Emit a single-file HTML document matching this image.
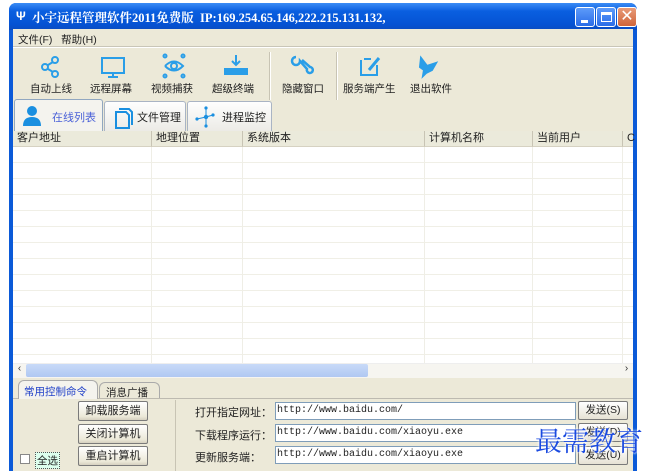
<!DOCTYPE html>
<html style="width:655px;height:471px;overflow:hidden"><head><meta charset="utf-8"><style>
*{margin:0;padding:0;box-sizing:border-box}
body{width:655px;height:471px;background:#fff;position:relative;overflow:hidden;font-family:"Liberation Sans","Noto Sans CJK SC",sans-serif;font-size:11px;color:#222}
.a{position:absolute}
.win{left:9px;top:3px;width:628px;height:468px;background:#0b5ad8;border-radius:7px 7px 0 0}
.title{left:9px;top:3px;width:628px;height:27px;border-radius:7px 7px 0 0;background:linear-gradient(#3b8cf5,#0a5fe0 30%,#0552d3 80%,#0a4cc0)}
.client{left:13px;top:29px;width:620px;height:442px;background:#ece9d8}
.tt{color:#fff;font-weight:bold;font-size:12.5px;font-family:"Liberation Serif","Noto Serif CJK SC",serif;top:8px;left:32px;white-space:nowrap}
.wb{top:7px;width:20px;height:20px;border:1px solid #fff;border-radius:3px;background:linear-gradient(#5d9bfa,#2a6ce8)}
.lbl{font-size:10.5px;top:81px;white-space:nowrap}
.sep{width:2px;height:48px;top:52px;border-left:1px solid #c8c4b4;border-right:1px solid #fff}
.tab{top:101px;height:30px;border:1px solid #a9b4c4;border-bottom:none;border-radius:3px 3px 0 0;background:linear-gradient(#fefefe,#ecebe6);font-size:11px}
.hd{top:131px;height:16px;background:#ebeadb;border-bottom:1px solid #d6d2c2;border-right:1px solid #c8c4b4;padding-left:4px;font-size:11px;line-height:15px}
.btn{left:78px;width:70px;height:20px;border:1px solid #7a7a7a;border-radius:2px;background:linear-gradient(#fff,#ece9d8 80%,#d6d0c0);text-align:center;line-height:18px;font-size:11px}
.in{left:275px;width:301px;height:18px;background:#fff;border:1px solid #7f9db9;font-family:"Liberation Mono",monospace;font-size:10px;line-height:16px;padding-left:1px}
.send{left:578px;width:50px;height:19px;border:1px solid #7a7a7a;border-radius:2px;background:linear-gradient(#fff,#e6e2d4);text-align:center;line-height:17px;font-size:10.5px}
.fl{left:195px;font-size:11px}
</style></head><body>
<div class="a win"></div>
<div class="a title"></div>
<div class="a" style="left:16px;top:9px;color:#fff;font-size:12px;font-weight:bold">Ψ</div>
<div class="a tt">小宇远程管理软件2011免费版 &nbsp;IP:169.254.65.146,222.215.131.132,</div>
<div class="a wb" style="left:575px"><div class="a" style="left:5px;top:12px;width:7px;height:3px;background:#fff"></div></div>
<div class="a wb" style="left:596px"><div class="a" style="left:4px;top:4px;width:11px;height:10px;border:1px solid #fff;border-top-width:3px"></div></div>
<div class="a wb" style="left:617px;background:linear-gradient(#e89a78,#d0643a);color:#fff;font-size:16px;line-height:17px;text-align:center">✕</div>
<div class="a client"></div>
<div class="a" style="left:18px;top:32px;font-size:10.5px">文件(F) &nbsp;&nbsp;帮助(H)</div>
<div class="a" style="left:13px;top:46px;width:620px;height:1px;background:#c9c6b8"></div>
<div class="a" style="left:13px;top:47px;width:620px;height:1px;background:#fff"></div>
<svg class="a" style="left:13px;top:50px" width="460" height="30" fill="none" stroke="#2a9ee8" stroke-width="2">
<circle cx="32" cy="17" r="3"/><circle cx="42" cy="10" r="3"/><circle cx="42" cy="24" r="3"/><path d="M35 15l5-3M35 19l5 3"/>
<rect x="89" y="8" width="22" height="15"/><path d="M95 27h10M100 23v4"/>
<circle cx="161" cy="16" r="3"/><path d="M152 16q9-9 18 0q-9 9-18 0"/><circle cx="152" cy="6" r="1.5"/><circle cx="170" cy="6" r="1.5"/><circle cx="152" cy="26" r="1.5"/><circle cx="170" cy="26" r="1.5"/>
<path d="M223 5v9M219 11l4 4 4-4"/><rect x="212" y="19" width="22" height="5" fill="#2a9ee8"/>
<path d="M283 7a4 4 0 1 0 4 4l7 8a3 3 0 1 0 3-2l-8-7" stroke-width="2.5"/>
<path d="M351 9h7M348 10v15h16v-10"/><path d="M356 20l10-12" stroke-width="3"/>
<path d="M408 8l6 8 9-3-4 7-6 3-3 3 1-6-4-3z" fill="#2a9ee8"/>
</svg>
<div class="a lbl" style="left:30px">自动上线</div>
<div class="a lbl" style="left:90px">远程屏幕</div>
<div class="a lbl" style="left:151px">视频捕获</div>
<div class="a lbl" style="left:212px">超级终端</div>
<div class="a sep" style="left:269px"></div>
<div class="a lbl" style="left:282px">隐藏窗口</div>
<div class="a sep" style="left:336px"></div>
<div class="a lbl" style="left:343px">服务端产生</div>
<div class="a lbl" style="left:410px">退出软件</div>
<div class="a tab" style="left:14px;width:89px;top:99px;height:33px;background:#f4f3ee;border-color:#91a7c0"></div>
<div class="a tab" style="left:104px;width:82px"></div>
<div class="a tab" style="left:187px;width:85px"></div>
<svg class="a" style="left:20px;top:104px" width="260" height="26">
<circle cx="12" cy="7" r="5" fill="#1a8fe0"/><path d="M3 22q0-9 9-9t9 9z" fill="#1a8fe0"/>
<path d="M96 8h10l3 3v13h-13z M99 5h10l3 3v13" fill="none" stroke="#1a8fe0" stroke-width="2"/>
<g fill="#1a8fe0"><circle cx="186" cy="4" r="1.6"/><circle cx="186" cy="13" r="2.2"/><circle cx="186" cy="22" r="1.6"/><circle cx="177" cy="15" r="1.6"/><circle cx="193" cy="11" r="1.6"/></g>
<path d="M186 4v18M177 15l9-2 7-2" stroke="#1a8fe0"/>
</svg>
<div class="a" style="left:52px;top:109px;color:#4b62d8">在线列表</div>
<div class="a" style="left:137px;top:109px">文件管理</div>
<div class="a" style="left:222px;top:109px">进程监控</div>
<div class="a" style="left:13px;top:147px;width:620px;height:216px;background:#fff;background-image:repeating-linear-gradient(#fff 0 15px,#f0efe6 15px 16px)"></div>
<div class="a hd" style="left:13px;width:139px">客户地址</div>
<div class="a hd" style="left:152px;width:91px">地理位置</div>
<div class="a hd" style="left:243px;width:182px">系统版本</div>
<div class="a hd" style="left:425px;width:108px">计算机名称</div>
<div class="a hd" style="left:533px;width:90px">当前用户</div>
<div class="a hd" style="left:623px;width:10px;border-right:none">C</div>
<div class="a" style="left:151px;top:147px;width:1px;height:216px;background:#efeee6"></div>
<div class="a" style="left:242px;top:147px;width:1px;height:216px;background:#efeee6"></div>
<div class="a" style="left:424px;top:147px;width:1px;height:216px;background:#efeee6"></div>
<div class="a" style="left:532px;top:147px;width:1px;height:216px;background:#efeee6"></div>
<div class="a" style="left:622px;top:147px;width:1px;height:216px;background:#efeee6"></div>
<div class="a" style="left:13px;top:363px;width:620px;height:15px;background:#f6f5f0;border-top:1px solid #eee"></div>
<div class="a" style="left:13px;top:363px;width:13px;height:15px;font-size:10px;color:#333;text-align:center">‹</div>
<div class="a" style="left:620px;top:363px;width:13px;height:15px;font-size:10px;color:#333;text-align:center">›</div>
<div class="a" style="left:26px;top:364px;width:342px;height:13px;background:linear-gradient(#c8daf8,#b0c8f2);border-radius:2px"></div>
<div class="a" style="left:13px;top:398px;width:620px;height:1px;background:#bdbab0"></div>
<div class="a" style="left:18px;top:380px;width:80px;height:19px;border:1px solid #aaa;border-bottom:none;border-radius:6px 6px 0 0;background:#f4f3ee;font-size:10.5px;color:#2040c8;padding:3px 0 0 5px">常用控制命令</div>
<div class="a" style="left:99px;top:382px;width:61px;height:16px;border:1px solid #aaa;border-bottom:none;border-radius:6px 6px 0 0;font-size:10.5px;padding:2px 0 0 6px">消息广播</div>
<div class="a" style="left:175px;top:400px;width:1px;height:71px;background:#c8c4b4"></div>
<div class="a btn" style="top:401px">卸载服务端</div>
<div class="a btn" style="top:424px">关闭计算机</div>
<div class="a btn" style="top:446px">重启计算机</div>
<div class="a" style="left:20px;top:454px;width:10px;height:10px;border:1px solid #888;background:#fff"></div>
<div class="a" style="left:35px;top:452px;font-size:10.5px;border:1px dotted #555;padding:0 1px;background:#dfe">全选</div>
<div class="a fl" style="top:404px">打开指定网址：</div>
<div class="a fl" style="top:427px">下载程序运行：</div>
<div class="a fl" style="top:449px">更新服务端：</div>
<div class="a in" style="top:402px">http://www.baidu.com/</div>
<div class="a in" style="top:424px">http://www.baidu.com/xiaoyu.exe</div>
<div class="a in" style="top:446px">http://www.baidu.com/xiaoyu.exe</div>
<div class="a send" style="top:401px">发送(S)</div>
<div class="a send" style="top:423px">发送(D)</div>
<div class="a send" style="top:446px">发送(U)</div>
<div class="a" style="left:535px;top:420px;font-size:27px;color:#1a4ae0;font-family:'Noto Serif CJK SC',serif;white-space:nowrap;text-shadow:0 0 2px #fff,0 0 3px #fff">最需教育</div>
</body></html>
